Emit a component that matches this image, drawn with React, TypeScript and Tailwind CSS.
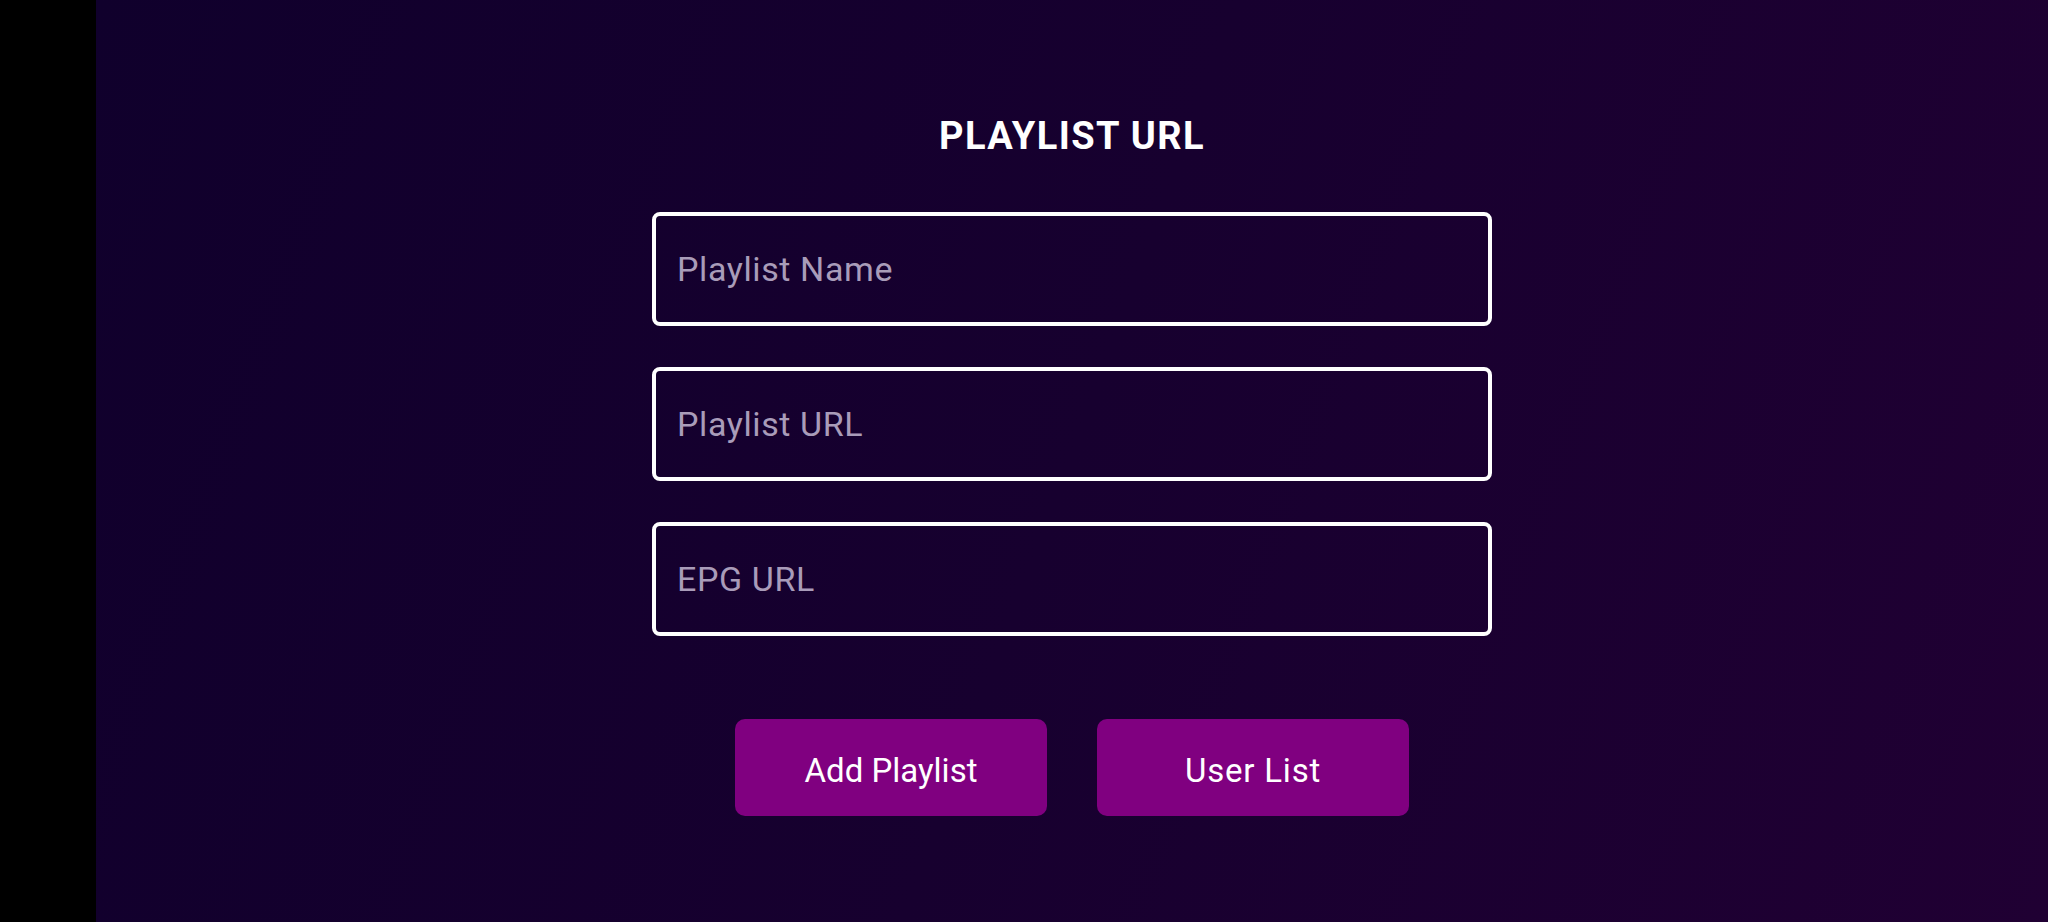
import React from 'react';

export default function App() {
    return (
        <div className="flex h-[922px] w-[2048px] overflow-hidden bg-black" style={{ fontFamily: 'Roboto, "Liberation Sans", sans-serif' }}>
            {/* left black strip */}
            <div className="w-[96px] shrink-0 bg-black"></div>

            <div className="flex flex-1 flex-col items-center bg-linear-110 from-[#10002c] via-[#17002f] to-[#200033] pt-[117px]">
                <h1 className="text-[38px] font-bold leading-none tracking-[1.4px] text-white">PLAYLIST URL</h1>

                <form className="mt-[57px] flex w-[840px] flex-col gap-[41px]" onSubmit={(e) => e.preventDefault()}>
                    <input
                        type="text"
                        placeholder="Playlist Name"
                        className="h-[114px] w-full rounded-[8px] border-4 border-white bg-transparent px-[21px] text-[34px] tracking-[0.6px] text-white outline-none placeholder:text-[#a99cb9]"
                    />
                    <input
                        type="text"
                        placeholder="Playlist URL"
                        className="h-[114px] w-full rounded-[8px] border-4 border-white bg-transparent px-[21px] text-[34px] tracking-[0.6px] text-white outline-none placeholder:text-[#a99cb9]"
                    />
                    <input
                        type="text"
                        placeholder="EPG URL"
                        className="h-[114px] w-full rounded-[8px] border-4 border-white bg-transparent px-[21px] text-[34px] tracking-[0.6px] text-white outline-none placeholder:text-[#a99cb9]"
                    />
                </form>

                <div className="mt-[83px] flex gap-[50px]">
                    <button className="h-[97px] w-[312px] rounded-[10px] bg-[#800080] pt-[6px] text-[33px] text-white">Add Playlist</button>
                    <button className="h-[97px] w-[312px] rounded-[10px] bg-[#800080] pt-[6px] text-[33px] tracking-[0.8px] text-white">User List</button>
                </div>
            </div>
        </div>
    );
}
